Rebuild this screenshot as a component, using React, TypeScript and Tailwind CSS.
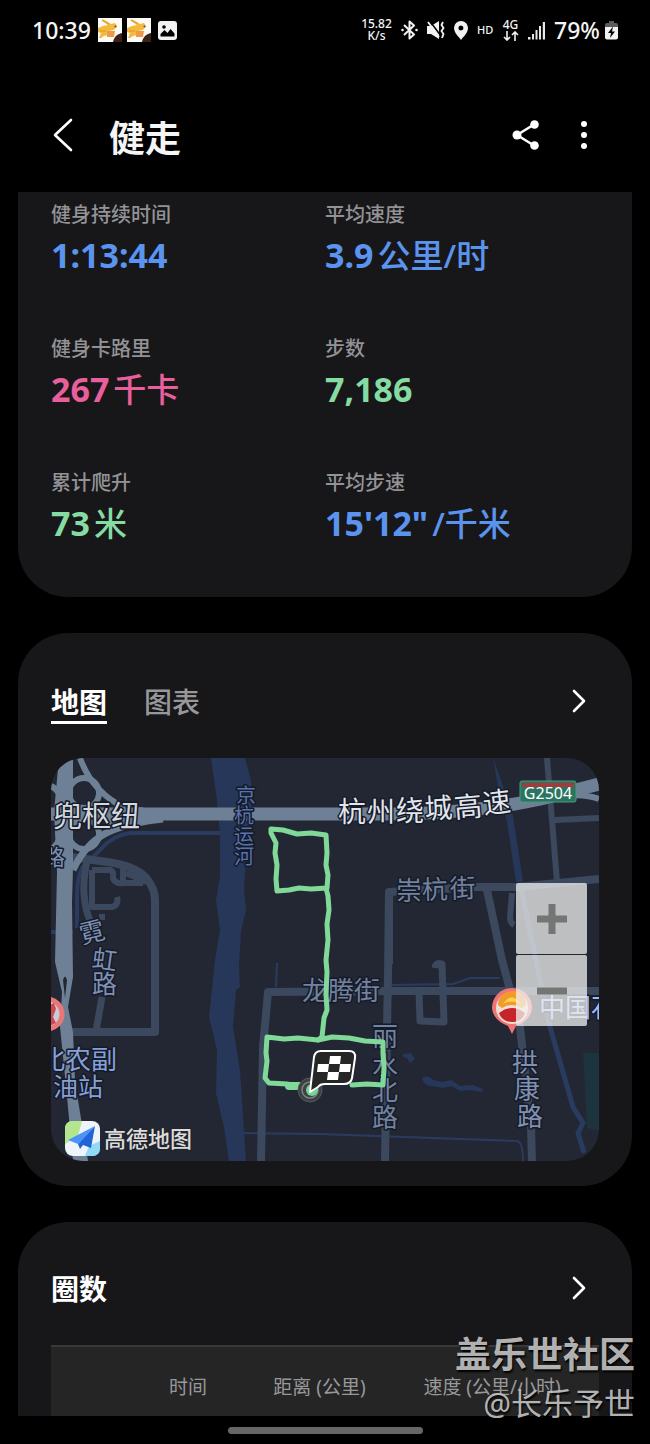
import type { ReactNode } from 'react';

const stats = [
  { label: '健身持续时间', value: '1:13:44', unit: '', color: 'text-[#5b94ee]' },
  { label: '平均速度', value: '3.9', unit: '公里/时', color: 'text-[#5b94ee]' },
  { label: '健身卡路里', value: '267', unit: '千卡', color: 'text-[#e85f9b]' },
  { label: '步数', value: '7,186', unit: '', color: 'text-[#86dba2]' },
  { label: '累计爬升', value: '73', unit: '米', color: 'text-[#86dba2]' },
  { label: '平均步速', value: '15\'12"', unit: '/千米', color: 'text-[#5b94ee]' },
];

// Each character of a label has its own x / y / rotation when the road bends
const mapLabels = [
  { text: '兜枢纽', x: '2', y: '69', size: 29, fill: '#d3d7de' },
  { text: '杭州绕城高速', x: '287 316 345 374 404 433', y: '64 64 63 61 60 56', rotate: '0 0 0 -3 -5 -7', size: 28, fill: '#e2e6ec' },
  { text: '京杭运河', x: '185 183 183 183', y: '45 65 86 106', size: 20, fill: '#5873ae' },
  { text: '路', x: '-8', y: '107', size: 22, fill: '#7e90b4' },
  { text: '霓虹路', x: '31 40 41', y: '186 209 235', rotate: '-14 8 0', size: 25, fill: '#7e90b4' },
  { text: '北农副', x: '-12', y: '311', size: 26, fill: '#86a0d8' },
  { text: '油站', x: '2', y: '338', size: 25, fill: '#86a0d8' },
  { text: '崇杭街', x: '345 371 399', y: '142 141 140', rotate: '0 -1 -2', size: 26, fill: '#73829f' },
  { text: '龙腾街', x: '251', y: '242', size: 26, fill: '#73829f' },
  { text: '丽水北路', x: '321 321 321 321', y: '288 317 342 369', size: 26, fill: '#73829f' },
  { text: '拱康路', x: '461 463 466', y: '314 340 368', size: 26, fill: '#8090b0' },
  { text: '中国石', x: '488', y: '259', size: 26, fill: '#a4b7ee' },
];

const CJK = 'font-["Noto_Sans","Noto_Sans_CJK_SC",sans-serif]';

function AppIcon() {
  return (
    <svg viewBox="0 0 24 24" className="w-6 h-6" aria-hidden="true">
      <rect width="24" height="24" fill="#fdfbf6" />
      <path d="M0 10l5-2 5-1-5-4 1-1 7 4 4-1 2 3-3 4-5 1-1 4-4 1-3 2H1l2-5-3-1z" fill="#f2bb3f" />
      <path d="M4 2l7 4M2 13h6" stroke="#e8a32c" strokeWidth="1.500" />
      <path d="M9 13h8l-1 6H9z" fill="#ee9a4a" />
      <circle cx="17.500" cy="8.500" r="1" fill="#6b4a22" />
      <path d="M24 15v9h-9c1-5 4-8 9-9z" fill="#3b2117" />
    </svg>
  );
}

function StatusBar() {
  return (
    <div className="flex items-center justify-between h-[60px] px-8">
      <div className="flex items-center gap-[5px]">
        <span className="text-[23px] font-medium mr-[2px]">10:39</span>
        <AppIcon />
        <AppIcon />
        <svg viewBox="0 0 19 19" className="w-[19px] h-[19px] ml-[2px]" aria-hidden="true">
          <rect width="19" height="19" rx="3" fill="#f2f2f2" />
          <circle cx="6" cy="6" r="1.800" fill="#000" />
          <path d="M2.500 15.500v-2.500l4-4 3 3 3-4 4 4.500v3z" fill="#000" />
        </svg>
      </div>
      <div className="flex items-center gap-[9px]">
        <div className="w-[31px] text-center text-xs leading-3 font-medium">
          <div>15.82</div>
          <div>K/s</div>
        </div>
        <svg viewBox="0 0 17 20" className="w-[17px] h-5" fill="none" stroke="#f2f2f2" strokeWidth="2" aria-hidden="true">
          <path d="M3 5l10 9.500-4.500 4V1.500l4.500 4L3 15" strokeLinejoin="round" />
          <circle cx="1.500" cy="10" r="1.300" fill="#f2f2f2" stroke="none" />
          <circle cx="15.500" cy="10" r="1.300" fill="#f2f2f2" stroke="none" />
        </svg>
        <svg viewBox="0 0 18 20" className="w-[18px] h-5" aria-hidden="true">
          <path d="M0 6h4l8-5v18l-8-5H0z" fill="#f2f2f2" />
          <path d="M2 0l12 16" stroke="#000" strokeWidth="1.600" />
          <path d="M1 2l11 15" stroke="#f2f2f2" strokeWidth="1.800" />
          <path d="M16 2l-1.500 3 2 3-2 3 2 3-1.500 4" fill="none" stroke="#f2f2f2" strokeWidth="1.800" />
        </svg>
        <svg viewBox="0 0 14 19" className="w-[14px] h-[19px]" aria-hidden="true">
          <path d="M7 0a7 7 0 0 1 7 7c0 5-5 9-7 12C5 16 0 12 0 7a7 7 0 0 1 7-7zm0 4.500a2.500 2.500 0 1 0 0 5 2.500 2.500 0 0 0 0-5z" fill="#f2f2f2" />
        </svg>
        <span className="w-4 text-[11px] font-medium">HD</span>
        <div className="w-[17px] flex flex-col items-center text-xs leading-3 font-medium">
          4G
          <svg viewBox="0 0 16 10" className="w-4 h-[10px]" fill="none" stroke="#f2f2f2" strokeWidth="1.600" aria-hidden="true">
            <path d="M4 0v9M1 6l3 3 3-3M12 10V1M9 4l3-3 3 3" />
          </svg>
        </div>
        <svg viewBox="0 0 17 19" className="w-[17px] h-[19px]" aria-hidden="true">
          <path d="M0 16h2.500v2.500H0zM4 13h2v5.500H4zM7.500 9h2v9.500h-2zM11 5h2v13.500h-2zM14.800 1H17v17.500h-2.200z" fill="#e8e8e8" />
        </svg>
        <div className="flex items-center gap-1">
          <span className="w-[47px] text-[23px] font-medium">79%</span>
          <svg viewBox="0 0 13 19" className="w-[13px] h-[19px]" aria-hidden="true">
            <path d="M4 0h5v2h2a2 2 0 0 1 2 2v3H0V4a2 2 0 0 1 2-2h2z" fill="#5c5c5c" />
            <path d="M0 6h13v10.500a2 2 0 0 1-2 2H2a2 2 0 0 1-2-2z" fill="#f2f2f2" />
            <path d="M8 5.500L3 12h3l-1 5 5-6.500H7z" fill="#000" />
          </svg>
        </div>
      </div>
    </div>
  );
}

function ChevronButton({ label }: { label: string }) {
  return (
    <button aria-label={label} className="flex items-center justify-center w-10 h-9">
      <svg viewBox="0 0 14 24" className="w-[14px] h-6" fill="none" stroke="#fff" strokeWidth="2.600" strokeLinecap="round" strokeLinejoin="round">
        <path d="M2 2l10 10L2 22" />
      </svg>
    </button>
  );
}

function RouteMap() {
  return (
    <svg viewBox="0 0 548 403" className={`block w-full h-auto ${CJK}`} role="img" aria-label="路线地图">
      <rect width="548" height="403" fill="#232733" />
      <path d="M532 295h16v78l-12-3z" fill="#1d333d" />

      {/* Water */}
      <g fill="#26375a">
        <path d="M160 0h34l6 22v27l-4 36-3 47 2 20-5 20-2 37 1 20-4 3-3 37 7 43 2 30 2 33 2 28h-17l-5-34-8-34 1-43-8-33 4-37 2-20 5-30-4-30 4-23V75l-3-33z" />
        <path d="M352 296l8-1 4 6-5 4-3-5-4-1zM371 320q6-4 11 2l10 2 8-2 9 6 13-1 10 4-1 3-12-2-10 1-9-5-8 2-12-2q-7 0-9-8z" />
        <path d="M245 327l15-2 10 3-10 3zM442 0l10 28 10 30 10 66h-7l-9-60-8-30z" />
      </g>
      <g fill="none" stroke="#293c5f" strokeWidth="3">
        <path d="M169 75H79q-17 2-30 17l-18 18q-5 10-5 28v32M0 174h22" strokeWidth="4" />
        <path d="M469 125l12 58 18 86 23 80 10 16-5 10 6 20" strokeWidth="5" />
        <path d="M193 375l76 1 197 7q6 1 6 20M226 205l-1 24M341 227l61-1 17-6h30" strokeWidth="2" />
      </g>

      {/* Streets */}
      <g fill="none" stroke="#3b485e" strokeWidth="8" strokeLinejoin="round">
        <path d="M21 99l35 5q30 4 40 17 8 10 8 21v132H21" />
        <path d="M36 102q-4 20-3 34 1 16 7 29M51 239l-6 34" strokeWidth="7" />
        <path d="M41 112h18q4 1 3 8 2 6 10 5h20M72 125v-17M75 115l20 9M41 112v37h20q7-2 5-10M51 156v6" strokeWidth="6" />
        <path d="M496 0l5 62 5 62M504 62l44-2" strokeWidth="6" />
        <path d="M338 206v-72l88-5h40l82-8M338 134l-1 85-1 50-2 134" />
        <path d="M436 132l15 70 18 67 11 100 1 34" />
        <path d="M461 135l-2 24q0 6 4 8" strokeWidth="6" />
        <path d="M210 403l2-114 5-55 120-1h211" />
        <path d="M384 210q1-6 7-4l2 58-24-1-1-30" strokeWidth="7" />
      </g>

      {/* Expressways */}
      <g fill="none" stroke="#6e8095">
        <path d="M0 56h330q90 0 160-15l58-15" strokeWidth="13" />
        <path d="M500 40q30-6 48 1" strokeWidth="6" />
        <circle cx="33" cy="35" r="15" strokeWidth="6" />
        <circle cx="33" cy="76" r="15" strokeWidth="6" />
        <path d="M29 0q12 34 45 50" strokeWidth="6" />
        <path d="M0 28q12 6 10 22M0 92q10-8 12-24" strokeWidth="6" />
        <path d="M22 112q14-30 40-40 20-8 50-11" strokeWidth="7" />
      </g>
      <path d="M55 49q10 4 36 0l20 12q-30 4-50 12-8-10-6-24z" fill="#6e8095" />
      <path d="M8 0h14v110l-1 34 1 75-5 30 5 25 2 50 13 79H22l-7-75-6-59 2-35-7-30 2-90-3-60z" fill="#6e8095" />
      <path d="M12 222q2-7 4 0l-2 18z" fill="#232733" />

      {/* POI pins */}
      <circle cx="-4" cy="256" r="15" fill="#c9ccd6" stroke="#e87878" strokeWidth="5" />
      <path d="M-4 248l7-3 2 6-3 8 3 6-9 4z" fill="#c94a50" />
      <path d="M441 250a20 20 0 1 1 40 0q-1 12-16 18l-4 8-4-8q-15-6-16-18z" fill="#ee7476" />
      <circle cx="461" cy="250" r="16" fill="#f3ddd2" />
      <path d="M447 247a14 14 0 0 1 28 0l-4 3q-10-6-20 0z" fill="#f29a2c" />
      <path d="M452 246q9-13 18 0-9-5-18 0z" fill="#fbd34f" />
      <path d="M448 255q13-10 26 0-3 9-13 9t-13-9z" fill="#c4252b" />

      {mapLabels.map((l) => (
        <text
          key={l.text}
          x={l.x}
          y={l.y}
          rotate={l.rotate}
          fontSize={l.size}
          fill={l.fill}
          stroke="#151a28"
          strokeWidth="3"
          strokeLinejoin="round"
          paintOrder="stroke"
        >
          {l.text}
        </text>
      ))}

      {/* Road shield */}
      <rect x="469" y="23" width="56" height="21" rx="2" fill="#2b7560" stroke="#4b9a80" />
      <path d="M471 25h52v4h-52z" fill="#a33b3c" />
      <text x="497" y="41" fontSize="16" fill="#fff" textAnchor="middle">G2504</text>

      {/* Walked route */}
      <g fill="none" stroke="#80d998" strokeWidth="5" strokeLinejoin="round" strokeLinecap="round">
        <path d="M220 71l12 1 14 4 14-1 15 2 1 18-1 12 2 10-1 13-16 1-12-1-10 2-12 1-1-12 1-14-2-12 1-10-5-10z" />
        <path d="M275 130l2 8 1 14-2 14 1 16-2 20 1 12-1 22 1 16-3 8-2 19-4 3-20-2-14 1-17-2-1 16 1 8-2 17 4 5 18 1 16 4" />
        <path d="M267 282l14-3 17 1 16 3 18 1v12l1 14-1 17-16-1-15 1" />
        <path d="M238 328h10" strokeWidth="8" />
      </g>
      <circle cx="259" cy="332" r="12" fill="#3d4143" stroke="#55595b" strokeWidth="1" />
      <circle cx="259" cy="332" r="8" fill="none" stroke="#7d8384" strokeWidth="1.500" />
      <circle cx="261" cy="332" r="6" fill="#74d492" />
      <path d="M270 293h28q7 0 6 7l-3 20q-1 6-8 6h-19q-5 0-7 3l-8 5 4-35q1-6 7-6z" fill="#262626" stroke="#fff" strokeWidth="2" strokeLinejoin="round" />
      <path d="M279 298h11l-1 8h-11zM267 306h11l-1 8h-11zM289 306h11l-1 8h-11zM277 314h11l-1 8h-11z" fill="#fff" />

      {/* Map provider logo */}
      <rect x="14" y="363" width="35" height="35" rx="8" fill="#eef4f8" />
      <path d="M22 363h9l-4 15-13 8v-15q0-8 8-8z" fill="#b4e68f" />
      <path d="M49 383v7q0 8-8 8h-7l4-10z" fill="#8edaf7" />
      <path d="M44 368L17 382l10 4z" fill="#4b93f7" />
      <path d="M44 368L27 386l2 5 3-4 8 3z" fill="#2363d8" />
      <text x="53" y="389" fontSize="22" fontWeight="500" fill="#dcdcdc" stroke="#22252c" strokeWidth="3" paintOrder="stroke">高德地图</text>
    </svg>
  );
}

function ZoomButton({ label, children }: { label: string; children: ReactNode }) {
  return (
    <button aria-label={label} className="flex items-center justify-center w-[71px] h-[71px] rounded-[2px] bg-[#f3f3f1]/75">
      <svg viewBox="0 0 30 30" className="w-[30px] h-[30px]" stroke="#747673" strokeWidth="7">
        {children}
      </svg>
    </button>
  );
}

export default function App() {
  return (
    <div className={`relative min-h-screen overflow-hidden bg-black text-[#f5f5f5] ${CJK}`}>
      <StatusBar />

      {/* Title bar */}
      <header className="flex items-center h-[132px] pl-[45px] pr-12 pt-[18px]">
        <button aria-label="返回" className="flex items-center justify-center w-9 h-12">
          <svg viewBox="0 0 20 34" className="w-5 h-[34px]" fill="none" stroke="#fff" strokeWidth="2.600" strokeLinecap="round" strokeLinejoin="round">
            <path d="M18 2L2 17l16 15" />
          </svg>
        </button>
        <h1 className="ml-7 pt-2 text-4xl font-bold">健走</h1>
        <button aria-label="分享" className="ml-auto">
          <svg viewBox="0 0 28 30" className="w-7 h-[30px]" fill="#fff">
            <path d="M5 15L22 4.500M5 15l17 10.500" stroke="#fff" strokeWidth="2.600" />
            <circle cx="5" cy="15" r="4.500" />
            <circle cx="22.500" cy="4.500" r="4.300" />
            <circle cx="22.500" cy="25.500" r="4.300" />
          </svg>
        </button>
        <button aria-label="更多" className="flex justify-center w-9 ml-[26px]">
          <svg viewBox="0 0 6 30" className="w-[6px] h-[30px]" fill="#fff">
            <circle cx="3" cy="4" r="3" />
            <circle cx="3" cy="15" r="3" />
            <circle cx="3" cy="26" r="3" />
          </svg>
        </button>
      </header>

      <main className="flex flex-col gap-9 px-[18px]">
        {/* Workout stats */}
        <section className="grid grid-cols-2 gap-y-[54px] px-[33px] pt-2 pb-[49px] bg-[#17171a] rounded-b-[50px]">
          {stats.map((stat) => (
            <div key={stat.label} className="h-20">
              <p className="text-xl leading-[30px] font-medium text-[#939396]">{stat.label}</p>
              <p className={`flex items-baseline gap-1 leading-[50px] ${stat.color}`}>
                <span className="text-[34px] font-bold">{stat.value}</span>
                {stat.unit && <span className="text-[33px] font-medium">{stat.unit}</span>}
              </p>
            </div>
          ))}
        </section>

        {/* Map */}
        <section className="px-[33px] pt-[50px] pb-[25px] bg-[#17171a] rounded-[50px]">
          <div className="flex items-start text-[28px] leading-[38px] font-medium">
            <button className="font-bold text-white border-b-3 border-white">地图</button>
            <button className="ml-[37px] text-[#98989b]">图表</button>
            <div className="ml-auto">
              <ChevronButton label="查看地图" />
            </div>
          </div>
          <div className="relative mt-[34px] overflow-hidden rounded-[32px]">
            <RouteMap />
            <div className="absolute right-3 top-[125px] flex flex-col gap-px">
              <ZoomButton label="放大">
                <path d="M15 0v30M0 15h30" />
              </ZoomButton>
              <ZoomButton label="缩小">
                <path d="M0 15h30" />
              </ZoomButton>
            </div>
          </div>
        </section>

        {/* Laps */}
        <section className="px-[33px] pt-[48px] bg-[#17171a] rounded-t-[50px]">
          <div className="flex items-start justify-between">
            <h2 className="text-[28px] leading-[38px] font-bold text-white">圈数</h2>
            <ChevronButton label="查看圈数" />
          </div>
          <table className="w-full mt-[37px] table-fixed bg-[#252526] border-t-2 border-[#39393a]">
            <thead>
              <tr className="text-[19px] leading-6 text-[#98989b]">
                <td className="w-[16%]" />
                <th className="w-[18%] pt-7 pb-[17px] font-normal">时间</th>
                <th className="w-[30%] font-normal pt-7 pb-[17px] whitespace-nowrap">距离 (公里)</th>
                <th className="w-[33%] font-normal pt-7 pb-[17px] whitespace-nowrap">速度 (公里/小时)</th>
                <td />
              </tr>
            </thead>
          </table>
        </section>
      </main>

      {/* Gesture bar */}
      <div className="flex items-center justify-center h-7">
        <div className="w-[30%] h-[7px] rounded-full bg-[#666]" />
      </div>

      {/* Watermark */}
      <div className="absolute right-[15px] bottom-[17px] text-right text-[#c9c9c9]/90 [text-shadow:1px_2px_2px_#000] pointer-events-none">
        <p className="text-4xl leading-[48px] font-bold">盖乐世社区</p>
        <p className="text-[31px] leading-[48px] font-normal">@长乐予世</p>
      </div>
    </div>
  );
}
